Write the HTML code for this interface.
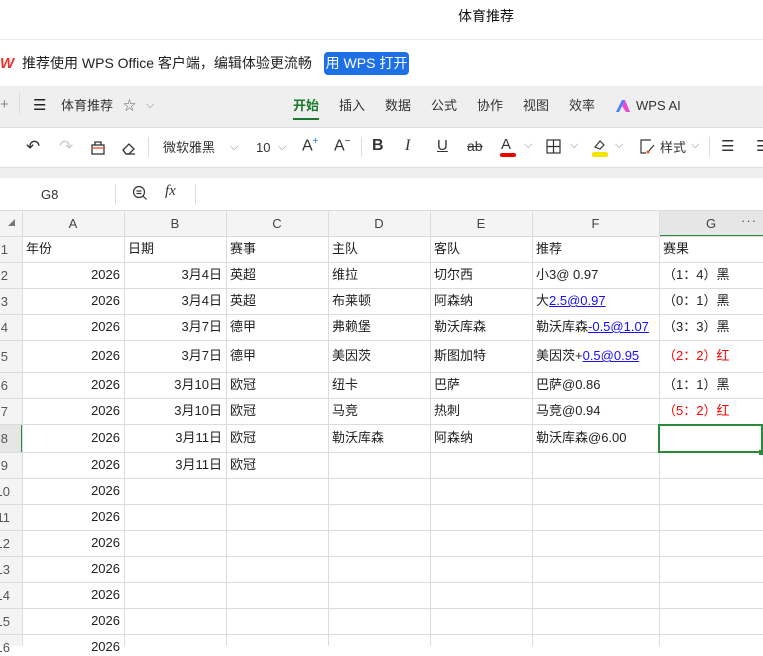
<!DOCTYPE html>
<html><head><meta charset="utf-8"><style>
*{margin:0;padding:0;box-sizing:border-box}
body{width:763px;height:646px;overflow:hidden;background:#fff;font-family:"Liberation Sans","Noto Sans CJK SC",sans-serif;color:#222;position:relative}
.a{position:absolute;white-space:nowrap}
.t{font-size:13px;line-height:20px}
.c{position:absolute;font-size:13px;line-height:16px;white-space:nowrap;color:#222}
.r{text-align:right}
.hl{position:absolute;left:0;width:763px;height:1px;background:#dcdcdc}
.vl{position:absolute;top:211px;width:1px;height:435px;background:#dcdcdc}
.blue{color:#1a0dff;text-decoration:underline}
.red{color:#f00}
.ic{position:absolute;color:#333}
</style></head><body>
<div class="a" style="left:458px;top:7px;font-size:14px;line-height:18px;color:#111">体育推荐</div>
<div class="a" style="left:0;top:39px;width:763px;height:1px;background:#eee"></div>
<div class="a" style="left:0;top:55px;font-size:15px;font-weight:bold;color:#e8322c;font-style:italic;letter-spacing:-2px">W</div>
<div class="a" style="left:22px;top:53px;font-size:14px;line-height:20px;color:#222">推荐使用 WPS Office 客户端，编辑体验更流畅</div>
<div class="a" style="left:324px;top:52px;width:85px;height:23px;background:#1f6fe5;border-radius:4px;color:#fff;font-size:14px;line-height:23px;text-align:center">用 WPS 打开</div>
<div class="a" style="left:0;top:86px;width:763px;height:41px;background:#efefef"></div>
<div class="a" style="left:0;top:96px;font-size:15px;color:#888">+</div>
<div class="a" style="left:19px;top:92px;width:1px;height:22px;background:#ddd"></div>
<div class="a t" style="left:33px;top:96px;font-size:15px">☰</div>
<div class="a t" style="left:61px;top:96px;color:#333">体育推荐</div>
<div class="a t" style="left:123px;top:96px;color:#666">☆</div>
<div class="a t" style="left:146px;top:95px;color:#888;font-size:11px">⌵</div>
<div class="a" style="left:293px;top:96px;font-size:13px;line-height:20px;color:#1a7a2c;font-weight:bold">开始</div>
<div class="a" style="left:293px;top:118px;width:26px;height:2px;background:#1a7a2c"></div>
<div class="a t" style="left:339px;top:96px;color:#333">插入</div>
<div class="a t" style="left:385px;top:96px;color:#333">数据</div>
<div class="a t" style="left:431px;top:96px;color:#333">公式</div>
<div class="a t" style="left:477px;top:96px;color:#333">协作</div>
<div class="a t" style="left:523px;top:96px;color:#333">视图</div>
<div class="a t" style="left:569px;top:96px;color:#333">效率</div>
<svg class="a" style="left:615px;top:99px" width="16" height="14"><path d="M1 13 L7 1 L10 1 L4 13Z" fill="#4d7cfe"/><path d="M7 7 L10 1 L15 13 L11 13Z" fill="#e84ad6"/></svg>
<div class="a t" style="left:636px;top:96px;color:#333">WPS AI</div>
<div class="a" style="left:0;top:127px;width:763px;height:1px;background:#ddd"></div>
<div class="a t" style="left:26px;top:137px;font-size:17px;color:#333">↶</div>
<div class="a t" style="left:59px;top:137px;font-size:17px;color:#ccc">↷</div>
<svg class="a" style="left:90px;top:140px" width="16" height="16"><rect x="2" y="5" width="12" height="9" fill="none" stroke="#333" stroke-width="1.3"/><path d="M5 5 V2 H11 V5" fill="none" stroke="#333" stroke-width="1.3"/><path d="M2 8 H14" stroke="#e8532c" stroke-width="1.3"/></svg>
<svg class="a" style="left:121px;top:140px" width="16" height="16"><path d="M2 10 L8 4 L13 9 L8 14 H5Z" fill="none" stroke="#333" stroke-width="1.3"/><path d="M5 14 H14" stroke="#333" stroke-width="1.3"/></svg>
<div class="a" style="left:148px;top:137px;width:1px;height:20px;background:#ddd"></div>
<div class="a t" style="left:163px;top:138px;color:#333">微软雅黑</div>
<div class="a t" style="left:230px;top:137px;color:#888;font-size:11px">⌵</div>
<div class="a t" style="left:256px;top:138px;color:#333">10</div>
<div class="a t" style="left:278px;top:137px;color:#888;font-size:11px">⌵</div>
<div class="a" style="left:302px;top:136px;font-size:16px;color:#333">A<sup style="font-size:10px;color:#1f6fe5">+</sup></div>
<div class="a" style="left:334px;top:136px;font-size:16px;color:#333">A<sup style="font-size:10px;color:#333">−</sup></div>
<div class="a" style="left:361px;top:137px;width:1px;height:20px;background:#ddd"></div>
<div class="a" style="left:372px;top:137px;font-size:16px;font-weight:bold;color:#333">B</div>
<div class="a" style="left:405px;top:137px;font-size:16px;font-style:italic;color:#333;font-family:'Liberation Serif',serif">I</div>
<div class="a" style="left:437px;top:137px;font-size:15px;text-decoration:underline;color:#333">U</div>
<div class="a" style="left:467px;top:138px;font-size:14px;text-decoration:line-through;color:#333">ab</div>
<div class="a" style="left:501px;top:136px;font-size:15px;color:#333">A</div>
<div class="a" style="left:500px;top:153px;width:16px;height:4px;background:#e00;border-radius:2px"></div>
<div class="a" style="left:524px;top:139px;color:#888;font-size:11px">⌵</div>
<svg class="a" style="left:546px;top:139px" width="15" height="15"><rect x="1" y="1" width="13" height="13" fill="none" stroke="#333" stroke-width="1.2"/><path d="M7.5 1V14M1 7.5H14" stroke="#333" stroke-width="1.2"/></svg>
<div class="a" style="left:570px;top:139px;color:#888;font-size:11px">⌵</div>
<svg class="a" style="left:592px;top:138px" width="16" height="14"><path d="M3 9 L8 3 L12 7 L8 11Z" fill="none" stroke="#333" stroke-width="1.2"/></svg>
<div class="a" style="left:592px;top:152px;width:16px;height:5px;background:#f0e600;border-radius:2px"></div>
<div class="a" style="left:615px;top:139px;color:#888;font-size:11px">⌵</div>
<svg class="a" style="left:640px;top:139px" width="16" height="16"><path d="M11 1H1V14H6" fill="none" stroke="#333" stroke-width="1.2"/><path d="M8 13 L14 6" stroke="#333" stroke-width="1.2"/><circle cx="8" cy="13" r="1.5" fill="#e8532c"/></svg>
<div class="a t" style="left:660px;top:138px;color:#333">样式</div>
<div class="a" style="left:691px;top:139px;color:#888;font-size:11px">⌵</div>
<div class="a" style="left:709px;top:137px;width:1px;height:20px;background:#ddd"></div>
<div class="a t" style="left:721px;top:137px;color:#333;font-size:15px">☰</div>
<div class="a t" style="left:756px;top:137px;color:#333;font-size:15px">☰</div>
<div class="a" style="left:0;top:167px;width:763px;height:11px;background:#efefef;border-top:1px solid #ddd"></div>
<div class="a t" style="left:41px;top:185px;color:#333">G8</div>
<div class="a" style="left:115px;top:184px;width:1px;height:20px;background:#ddd"></div>
<svg class="a" style="left:132px;top:185px" width="16" height="16"><circle cx="7" cy="7" r="5.5" fill="none" stroke="#333" stroke-width="1.2"/><path d="M4.5 6H9.5M4.5 8.5H9.5M11 11L14.5 14.5" stroke="#333" stroke-width="1.2"/></svg>
<div class="a" style="left:165px;top:183px;font-size:15px;font-style:italic;color:#333;font-family:'Liberation Serif',serif">fx</div>
<div class="a" style="left:195px;top:184px;width:1px;height:20px;background:#ddd"></div>
<div class="a" style="left:0;top:210px;width:763px;height:1px;background:#dcdcdc"></div>
<!-- header row -->
<div class="a" style="left:0;top:211px;width:763px;height:26px;background:#f4f4f4"></div>
<div class="a" style="left:659px;top:211px;width:104px;height:26px;background:#e6e6e6"></div>
<div class="a" style="left:659px;top:235px;width:104px;height:2px;background:#2a8a3a"></div>
<div class="a" style="left:0;top:237px;width:22px;height:409px;background:#f4f4f4"></div>
<div class="a" style="left:0;top:425px;width:22px;height:28px;background:#e6e6e6"></div>
<div class="a" style="left:21px;top:425px;width:2px;height:28px;background:#2a8a3a"></div>
<svg class="a" style="left:8px;top:219px" width="8" height="8"><path d="M7 0V7H0Z" fill="#777"/></svg>
<div class="c" style="left:22px;width:102px;top:216px;text-align:center;color:#444">A</div>
<div class="c" style="left:124px;width:102px;top:216px;text-align:center;color:#444">B</div>
<div class="c" style="left:226px;width:102px;top:216px;text-align:center;color:#444">C</div>
<div class="c" style="left:328px;width:102px;top:216px;text-align:center;color:#444">D</div>
<div class="c" style="left:430px;width:102px;top:216px;text-align:center;color:#444">E</div>
<div class="c" style="left:532px;width:127px;top:216px;text-align:center;color:#444">F</div>
<div class="c" style="left:659px;width:104px;top:216px;text-align:center;color:#444">G</div>
<div class="c" style="left:741px;top:213px;color:#555;letter-spacing:1px">···</div>
<!-- grid lines -->
<div class="hl" style="top:236px"></div><div class="hl" style="top:262px"></div><div class="hl" style="top:288px"></div><div class="hl" style="top:314px"></div><div class="hl" style="top:340px"></div><div class="hl" style="top:372px"></div><div class="hl" style="top:398px"></div><div class="hl" style="top:424px"></div><div class="hl" style="top:452px"></div><div class="hl" style="top:478px"></div><div class="hl" style="top:504px"></div><div class="hl" style="top:530px"></div><div class="hl" style="top:556px"></div><div class="hl" style="top:582px"></div><div class="hl" style="top:608px"></div><div class="hl" style="top:634px"></div>
<div class="vl" style="left:22px"></div><div class="vl" style="left:124px"></div><div class="vl" style="left:226px"></div><div class="vl" style="left:328px"></div><div class="vl" style="left:430px"></div><div class="vl" style="left:532px"></div><div class="vl" style="left:659px"></div>
<!-- selection -->
<div class="a" style="left:658px;top:424px;width:105px;height:29px;border:2px solid #2a8a3a"></div>
<div class="a" style="left:759px;top:450px;width:5px;height:5px;background:#2a8a3a"></div>
<!-- row numbers -->
<div class="c r" style="left:-20px;width:28px;top:242px;color:#555">1</div>
<div class="c r" style="left:-20px;width:28px;top:268px;color:#555">2</div>
<div class="c r" style="left:-20px;width:28px;top:294px;color:#555">3</div>
<div class="c r" style="left:-20px;width:28px;top:320px;color:#555">4</div>
<div class="c r" style="left:-20px;width:28px;top:349px;color:#555">5</div>
<div class="c r" style="left:-20px;width:28px;top:378px;color:#555">6</div>
<div class="c r" style="left:-20px;width:28px;top:404px;color:#555">7</div>
<div class="c r" style="left:-20px;width:28px;top:431px;color:#555">8</div>
<div class="c r" style="left:-20px;width:28px;top:458px;color:#555">9</div>
<div class="c r" style="left:-20px;width:30px;top:484px;color:#555">10</div>
<div class="c r" style="left:-20px;width:30px;top:510px;color:#555">11</div>
<div class="c r" style="left:-20px;width:30px;top:536px;color:#555">12</div>
<div class="c r" style="left:-20px;width:30px;top:562px;color:#555">13</div>
<div class="c r" style="left:-20px;width:30px;top:588px;color:#555">14</div>
<div class="c r" style="left:-20px;width:30px;top:614px;color:#555">15</div>
<div class="c r" style="left:-20px;width:30px;top:640px;color:#555">16</div>
<!-- row1 -->
<div class="c" style="left:26px;top:241px">年份</div><div class="c" style="left:128px;top:241px">日期</div><div class="c" style="left:230px;top:241px">赛事</div><div class="c" style="left:332px;top:241px">主队</div><div class="c" style="left:434px;top:241px">客队</div><div class="c" style="left:536px;top:241px">推荐</div><div class="c" style="left:663px;top:241px">赛果</div>
<!-- data -->
<div class="c r" style="left:22px;width:98px;top:267px">2026</div><div class="c r" style="left:124px;width:98px;top:267px">3月4日</div><div class="c" style="left:230px;top:267px">英超</div><div class="c" style="left:332px;top:267px">维拉</div><div class="c" style="left:434px;top:267px">切尔西</div><div class="c" style="left:536px;top:267px">小3@ 0.97</div><div class="c" style="left:663px;top:267px">（1：4）黑</div>
<div class="c r" style="left:22px;width:98px;top:293px">2026</div><div class="c r" style="left:124px;width:98px;top:293px">3月4日</div><div class="c" style="left:230px;top:293px">英超</div><div class="c" style="left:332px;top:293px">布莱顿</div><div class="c" style="left:434px;top:293px">阿森纳</div><div class="c" style="left:536px;top:293px">大<span class="blue">2.5@0.97</span></div><div class="c" style="left:663px;top:293px">（0：1）黑</div>
<div class="c r" style="left:22px;width:98px;top:319px">2026</div><div class="c r" style="left:124px;width:98px;top:319px">3月7日</div><div class="c" style="left:230px;top:319px">德甲</div><div class="c" style="left:332px;top:319px">弗赖堡</div><div class="c" style="left:434px;top:319px">勒沃库森</div><div class="c" style="left:536px;top:319px">勒沃库森<span class="blue">-0.5@1.07</span></div><div class="c" style="left:663px;top:319px">（3：3）黑</div>
<div class="c r" style="left:22px;width:98px;top:348px">2026</div><div class="c r" style="left:124px;width:98px;top:348px">3月7日</div><div class="c" style="left:230px;top:348px">德甲</div><div class="c" style="left:332px;top:348px">美因茨</div><div class="c" style="left:434px;top:348px">斯图加特</div><div class="c" style="left:536px;top:348px">美因茨+<span class="blue">0.5@0.95</span></div><div class="c red" style="left:663px;top:348px">（2：2）红</div>
<div class="c r" style="left:22px;width:98px;top:377px">2026</div><div class="c r" style="left:124px;width:98px;top:377px">3月10日</div><div class="c" style="left:230px;top:377px">欧冠</div><div class="c" style="left:332px;top:377px">纽卡</div><div class="c" style="left:434px;top:377px">巴萨</div><div class="c" style="left:536px;top:377px">巴萨@0.86</div><div class="c" style="left:663px;top:377px">（1：1）黑</div>
<div class="c r" style="left:22px;width:98px;top:403px">2026</div><div class="c r" style="left:124px;width:98px;top:403px">3月10日</div><div class="c" style="left:230px;top:403px">欧冠</div><div class="c" style="left:332px;top:403px">马竞</div><div class="c" style="left:434px;top:403px">热刺</div><div class="c" style="left:536px;top:403px">马竞@0.94</div><div class="c red" style="left:663px;top:403px">（5：2）红</div>
<div class="c r" style="left:22px;width:98px;top:430px">2026</div><div class="c r" style="left:124px;width:98px;top:430px">3月11日</div><div class="c" style="left:230px;top:430px">欧冠</div><div class="c" style="left:332px;top:430px">勒沃库森</div><div class="c" style="left:434px;top:430px">阿森纳</div><div class="c" style="left:536px;top:430px">勒沃库森@6.00</div>
<div class="c r" style="left:22px;width:98px;top:457px">2026</div><div class="c r" style="left:124px;width:98px;top:457px">3月11日</div><div class="c" style="left:230px;top:457px">欧冠</div>
<div class="c r" style="left:22px;width:98px;top:483px">2026</div>
<div class="c r" style="left:22px;width:98px;top:509px">2026</div>
<div class="c r" style="left:22px;width:98px;top:535px">2026</div>
<div class="c r" style="left:22px;width:98px;top:561px">2026</div>
<div class="c r" style="left:22px;width:98px;top:587px">2026</div>
<div class="c r" style="left:22px;width:98px;top:613px">2026</div>
<div class="c r" style="left:22px;width:98px;top:639px">2026</div>
</body></html>
